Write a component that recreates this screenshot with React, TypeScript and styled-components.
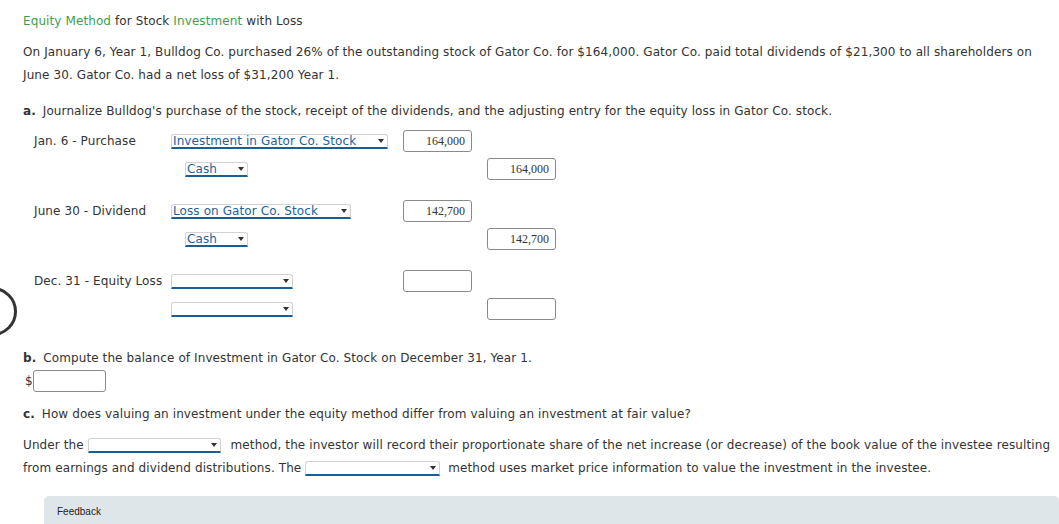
import React from "react";
import styled, { createGlobalStyle } from "styled-components";

const Global = createGlobalStyle`
  html, body { margin: 0; padding: 0; background: #fff; }
  body { font-family: "DejaVu Sans", Verdana, sans-serif; color: #333; font-size: 12px; letter-spacing: 0.1px; }
`;

const Page = styled.div`
  position: relative;
  width: 1059px;
  height: 524px;
  overflow: hidden;
  box-sizing: border-box;
  padding: 10px 6px 0 23px;
`;

const Title = styled.div`
  line-height: 23px;
`;

const Green = styled.span`
  color: #3aa152;
`;

const Para = styled.p<{ $mt?: number }>`
  margin: ${(p) => p.$mt ?? 0}px 0 0;
  line-height: 23px;
`;

const Letter = styled.b`
  font-weight: bold;
  margin-right: 3px;
`;

const Journal = styled.div`
  margin: 7px 0 0 11px;
  display: flex;
  flex-direction: column;
  gap: 20px;
`;

const Entry = styled.div`
  display: grid;
  grid-template-columns: 137px 232px 84px 84px;
  grid-auto-rows: 22px;
  row-gap: 6px;
  align-items: center;
`;

const Label = styled.div`
  white-space: nowrap;
`;

const SelectBox = styled.span<{ $w: number; $indent?: number; $mr?: number }>`
  position: relative;
  box-sizing: border-box;
  width: ${(p) => p.$w}px;
  margin-left: ${(p) => p.$indent ?? 0}px;
  margin-right: ${(p) => p.$mr ?? 0}px;
  height: 15px;
  border: 1px solid #d2d2d2;
  border-bottom: 2px solid #1b5d95;
  border-radius: 3px 3px 0 0;
  background: #fff;
  color: #1d5f9c;
  font-size: 12px;
  line-height: 12px;
  padding-left: 1px;
  white-space: nowrap;
  display: inline-flex;
  align-items: center;
  vertical-align: middle;
  &::after {
    content: "";
    position: absolute;
    right: 3px;
    top: 4px;
    border-left: 3.5px solid transparent;
    border-right: 3.5px solid transparent;
    border-top: 4px solid #333;
  }
`;

const Amount = styled.div`
  box-sizing: border-box;
  width: 69px;
  height: 22px;
  border: 1px solid #8a8a8a;
  border-radius: 3px;
  background: #fff;
  font-family: "Liberation Serif", "Times New Roman", serif;
  font-size: 12px;
  letter-spacing: 0;
  color: #333;
  text-align: right;
  padding-right: 6px;
  line-height: 20px;
`;

const Section = styled.div<{ $mt: number }>`
  margin-top: ${(p) => p.$mt}px;
  line-height: 23px;
`;

const DollarRow = styled.div`
  display: flex;
  align-items: center;
  margin-left: 2px;
  height: 22px;
`;

const Blank = styled(Amount)`
  width: 73px;
`;

const Feedback = styled.div`
  margin: 16px 0 0 21px;
  width: 1015px;
  height: 60px;
  background: #dfe6e9;
  border-radius: 5px;
  box-sizing: border-box;
  padding: 10px 13px;
  font-family: "Liberation Sans", Arial, sans-serif;
  font-size: 10px;
  letter-spacing: 0;
  color: #222;
`;

const Ring = styled.div`
  position: absolute;
  left: -32px;
  top: 287px;
  width: 43px;
  height: 43px;
  border: 3px solid #333;
  border-radius: 50%;
`;

type Line = { label?: string; acct: string; w: number; indent?: number; debit?: string; credit?: string; showDebit?: boolean; showCredit?: boolean };

const JournalEntry = ({ lines }: { lines: Line[] }) => (
  <Entry>
    {lines.map((l, i) => (
      <React.Fragment key={i}>
        <Label>{l.label ?? ""}</Label>
        <div>
          <SelectBox $w={l.w} $indent={l.indent}>{l.acct}</SelectBox>
        </div>
        <div>{l.showDebit ? <Amount>{l.debit}</Amount> : null}</div>
        <div>{l.showCredit ? <Amount>{l.credit}</Amount> : null}</div>
      </React.Fragment>
    ))}
  </Entry>
);

export default function App() {
  return (
    <>
      <Global />
      <Page>
        <Ring />
        <Title>
          <Green>Equity Method</Green> for Stock <Green>Investment</Green> with Loss
        </Title>
        <Para $mt={8}>
          On January 6, Year 1, Bulldog Co. purchased 26% of the outstanding stock of Gator Co. for $164,000. Gator Co. paid total dividends of $21,300 to all shareholders on June 30. Gator Co. had a net loss of $31,200 Year 1.
        </Para>
        <Section $mt={13}>
          <Letter>a.</Letter> Journalize Bulldog's purchase of the stock, receipt of the dividends, and the adjusting entry for the equity loss in Gator Co. stock.
        </Section>
        <Journal>
          <JournalEntry
            lines={[
              { label: "Jan. 6 - Purchase", acct: "Investment in Gator Co. Stock", w: 217, debit: "164,000", showDebit: true },
              { acct: "Cash", w: 63, indent: 14, credit: "164,000", showCredit: true },
            ]}
          />
          <JournalEntry
            lines={[
              { label: "June 30 - Dividend", acct: "Loss on Gator Co. Stock", w: 180, debit: "142,700", showDebit: true },
              { acct: "Cash", w: 63, indent: 14, credit: "142,700", showCredit: true },
            ]}
          />
          <JournalEntry
            lines={[
              { label: "Dec. 31 - Equity Loss", acct: "", w: 122, debit: "", showDebit: true },
              { acct: "", w: 122, credit: "", showCredit: true },
            ]}
          />
        </Journal>
        <Section $mt={27}>
          <Letter>b.</Letter> Compute the balance of Investment in Gator Co. Stock on December 31, Year 1.
        </Section>
        <DollarRow>
          <span>$</span>
          <Blank />
        </DollarRow>
        <Section $mt={11}>
          <Letter>c.</Letter> How does valuing an investment under the equity method differ from valuing an investment at fair value?
        </Section>
        <Para $mt={8}>
          Under the <SelectBox $w={133} $mr={6} /> method, the investor will record their proportionate share of the net increase (or decrease) of the book value of the investee resulting from earnings and dividend distributions. The <SelectBox $w={135} $mr={4} /> method uses market price information to value the investment in the investee.
        </Para>
        <Feedback>Feedback</Feedback>
      </Page>
    </>
  );
}
